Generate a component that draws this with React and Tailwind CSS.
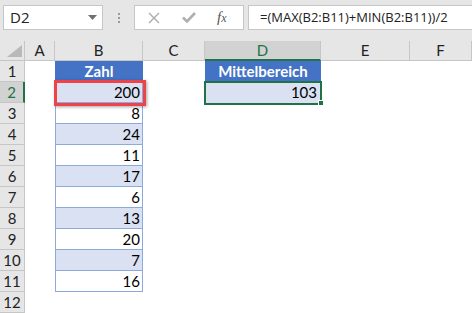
import React from "react";

const cols = ["A", "B", "C", "D", "E", "F"];
const values = [200, 8, 24, 11, 17, 6, 13, 20, 7, 16];

function Toolbar() {
  return (
    <div className="h-[41px] bg-[#e6e6e6] flex items-start pt-[5px] relative">
      <div className="ml-[3px] w-[100px] h-[25px] bg-white border border-[#c6c6c6] flex items-center justify-between pl-[6px] pr-[5px]">
        <span className="text-[15px] text-[#222] font-['Open_Sans',sans-serif] leading-none">D2</span>
        <svg width="9" height="5" viewBox="0 0 9 5"><path d="M0 0 L9 0 L4.5 5 Z" fill="#707070" /></svg>
      </div>
      <div className="ml-[14px] w-[3px] h-[25px] flex flex-col items-center justify-center gap-[2px]">
        <span className="w-[2px] h-[2px] bg-[#9a9a9a]" />
        <span className="w-[2px] h-[2px] bg-[#9a9a9a]" />
        <span className="w-[2px] h-[2px] bg-[#9a9a9a]" />
      </div>
      <div className="ml-[14px] w-[110px] h-[25px] bg-white border border-[#c6c6c6] flex items-center">
        <svg className="ml-[13px]" width="12" height="12" viewBox="0 0 12 12">
          <path d="M1 1 L11 11 M11 1 L1 11" stroke="#ababab" strokeWidth="1.4" fill="none" />
        </svg>
        <svg className="ml-[22px]" width="14" height="11" viewBox="0 0 14 11">
          <path d="M1 5.5 L5 9.5 L13 1" stroke="#b0b0b0" strokeWidth="2.6" fill="none" />
        </svg>
        <span className="ml-[21px] text-[15px] italic text-[#555] font-['Liberation_Serif',serif] leading-none">
          f<span className="text-[12px]">x</span>
        </span>
      </div>
      <div className="ml-[4px] flex-1 h-[25px] bg-white border border-[#c6c6c6] border-r-0 flex items-center pl-[11px]">
        <span className="text-[13px] text-[#222] font-['Open_Sans',sans-serif] leading-none">
          =(MAX(B2:B11)+MIN(B2:B11))/2
        </span>
      </div>
    </div>
  );
}

function Sheet() {
  const cells = [];
  cells.push(
    <div key="corner" className="bg-[#e6e6e6] border-r border-b border-[#c6c6c6] relative">
      <svg className="absolute left-[7px] top-[4px]" width="15" height="12" viewBox="0 0 15 12">
        <path d="M15 0 L15 12 L0 12 Z" fill="#b9b9b9" />
      </svg>
    </div>
  );
  cols.forEach((c) => {
    const sel = c === "D";
    cells.push(
      <div
        key={"h" + c}
        className={
          sel
            ? "bg-[#d2d2d2] border-r border-[#c6c6c6] border-b-2 border-b-[#217346] flex items-center justify-center text-[15px] text-[#217346]"
            : "bg-[#e6e6e6] border-r border-b border-[#c6c6c6] flex items-center justify-center text-[15px] text-[#222]"
        }
      >
        {c}
      </div>
    );
  });
  for (let r = 1; r <= 12; r++) {
    const sel = r === 2;
    cells.push(
      <div
        key={"r" + r}
        className={
          sel
            ? "bg-[#d2d2d2] border-b border-[#c6c6c6] border-r-2 border-r-[#217346] flex items-center justify-center text-[15px] text-[#217346]"
            : "bg-[#e6e6e6] border-r border-b border-[#c6c6c6] flex items-center justify-center text-[15px] text-[#222]"
        }
      >
        {r}
      </div>
    );
    cells.push(<div key={"a" + r} className="bg-white" />);
    if (r === 1) {
      cells.push(
        <div key={"b" + r} className="bg-[#4472c4] border-b border-[#8ea9db] flex items-center justify-center text-white font-bold text-[15px]">
          Zahl
        </div>
      );
    } else if (r <= 11) {
      const v = values[r - 2];
      const shade = r % 2 === 0;
      cells.push(
        <div
          key={"b" + r}
          className={
            (shade ? "bg-[#d9e1f2] " : "bg-white ") +
            "border-l border-r border-b border-[#8ea9db] flex items-center justify-end pr-[2px] text-[15px] text-black"
          }
        >
          {v}
        </div>
      );
    } else {
      cells.push(<div key={"b" + r} className="bg-white" />);
    }
    cells.push(<div key={"c" + r} className="bg-white" />);
    if (r === 1) {
      cells.push(
        <div key={"d" + r} className="bg-[#4472c4] flex items-center justify-center text-white font-bold text-[15px]">
          Mittelbereich
        </div>
      );
    } else if (r === 2) {
      cells.push(
        <div key={"d" + r} className="bg-[#d9e1f2] flex items-center justify-end pr-[4px] text-[15px] text-black">
          103
        </div>
      );
    } else {
      cells.push(<div key={"d" + r} className="bg-white" />);
    }
    cells.push(<div key={"e" + r} className="bg-white" />);
    cells.push(<div key={"f" + r} className="bg-white" />);
  }
  return (
    <div className="relative">
      <div className="grid grid-cols-[25px_30px_88px_62px_116px_89px_1fr] grid-rows-[20px_repeat(12,21px)] font-['Lato',sans-serif] leading-none">
        {cells}
      </div>
      <div className="absolute left-[54px] top-[39px] w-[92px] h-[26px] border-[3px] border-[#ef4347] shadow-[1px_1px_3px_rgba(0,0,0,0.35)] pointer-events-none" />
      <div className="absolute left-[204px] top-[40px] w-[118px] h-[24px] border-2 border-[#217346] pointer-events-none" />
      <div className="absolute left-[318px] top-[59px] w-[6px] h-[6px] bg-[#217346] border border-white pointer-events-none" />
    </div>
  );
}

export default function App() {
  return (
    <div className="w-[472px] h-[313px] overflow-hidden bg-white">
      <Toolbar />
      <Sheet />
    </div>
  );
}
